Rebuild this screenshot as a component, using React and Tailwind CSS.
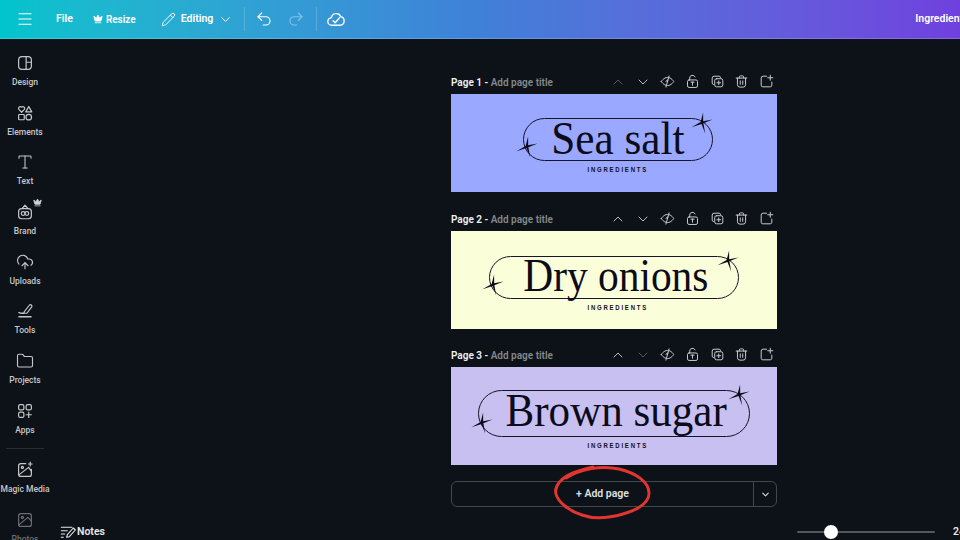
import React from "react";
import { Menu, Crown, Pencil, ChevronDown, ChevronUp, Undo2, Redo2, Type, CloudUpload, Folder } from "lucide-react";

const ui = { fontFamily: 'Roboto, "Liberation Sans", sans-serif' };

const I = ({ children, size = 18, className = "" }) => (
  <svg width={size} height={size} viewBox="0 0 24 24" fill="none" stroke="currentColor" strokeWidth="1.6" strokeLinecap="round" strokeLinejoin="round" className={className}>{children}</svg>
);

const DesignIcon = () => <I><rect x="3.5" y="3.5" width="17" height="17" rx="4.5" /><path d="M13.5 3.5v17M13.5 11h7" /></I>;
const ElementsIcon = () => <I><path d="M7.5 11 3.8 7.2a2.4 2.4 0 0 1 3.7-3 2.4 2.4 0 0 1 3.7 3z" /><path d="m17 3.5 4 7h-8z" /><rect x="3.5" y="14" width="7.5" height="7" rx="1" /><circle cx="17" cy="17.5" r="3.7" /></I>;
const BrandIcon = () => <I><path d="M8 7.5 12 3l4 4.5" /><rect x="3.5" y="7.5" width="17" height="13.5" rx="4" /><rect x="7" y="11.5" width="5" height="5" rx="2.5" /><rect x="12" y="11.5" width="5" height="5" rx="2.5" /></I>;
const ToolsIcon = () => <I><path d="m11 13 7-9a2 2 0 0 1 3 2.5l-6.5 8.5h-4z" /><path d="M4 14c2 1.5 4 1 6 1M4 19.5h16" strokeWidth="2" /></I>;
const AppsIcon = () => <I><rect x="3.5" y="3.5" width="7" height="7" rx="2" /><rect x="13.5" y="3.5" width="7" height="7" rx="2" /><rect x="3.5" y="13.5" width="7" height="7" rx="2" /><path d="M17 13.5v7M13.5 17h7" /></I>;
const MagicIcon = () => <I><path d="M13 3.5H6.5a3 3 0 0 0-3 3v11a3 3 0 0 0 3 3h11a3 3 0 0 0 3-3V11" /><path d="m3.8 18.5 13-10 3.7 5" /><circle cx="8.5" cy="8.5" r="1.4" /><path d="M19 1.5v5M16.5 4h5" /></I>;
const PhotoIcon = () => <I><rect x="3.5" y="3.5" width="17" height="17" rx="3" /><path d="m3.8 18.5 12-10 4.7 5" /><circle cx="8.5" cy="8.5" r="1.4" /></I>;
const CloudOk = () => <I size={20}><path d="M7 19.5a4.5 4.5 0 0 1-.6-9 6 6 0 0 1 11.4-1.4 5.3 5.3 0 0 1-.8 10.4z" /><path d="m8.5 14 2.5 2.5 6-7" /></I>;
const NotesIcon = () => <I size={16}><path d="M2 5h16M2 10h9M2 15h5M2 20h3" /><path d="m10 20 1-4 9-10 3 3-9 10z" /></I>;
const EyeOffIcon = () => <I size={15}><path d="M2 12s3.8-6.5 10-6.5S22 12 22 12s-3.8 6.5-10 6.5S2 12 2 12z" /><path d="M14.5 3 9.5 21" /><path d="M9.5 12a2.6 2.6 0 0 1 3.5-2.4" /></I>;
const LockIcon = () => <I size={15}><path d="M7.5 9.5V6.5a4.5 4.5 0 0 1 8.6-1.8" /><rect x="4" y="9.5" width="16" height="12" rx="2.5" /><path d="M9.5 13h5M12 13v5" /></I>;
const CopyAddIcon = () => <I size={15}><path d="M5.5 17A2.5 2.5 0 0 1 3.5 14.5v-8a3 3 0 0 1 3-3h8A2.5 2.5 0 0 1 17 5.5" /><rect x="7.5" y="7.5" width="13" height="13" rx="3" /><path d="M14 11v6M11 14h6" /></I>;
const TrashIcon = () => <I size={15}><path d="M3.5 6.5h17M8.5 6.5V5a2 2 0 0 1 2-2h3a2 2 0 0 1 2 2v1.5" /><path d="M5.5 6.5V17a4 4 0 0 0 4 4h5a4 4 0 0 0 4-4V6.5" /><path d="M10 11v5.5M14 11v5.5" /></I>;
const AddPageIcon = () => <I size={15}><path d="M12 3.5H6.5a3 3 0 0 0-3 3V18a2.5 2.5 0 0 0 2.5 2.5h12a2.5 2.5 0 0 0 2.5-2.5v-5" /><path d="M18 2v8M14 6h8" /></I>;

const Star = ({ className }) => (
  <svg viewBox="0 0 24 24" width="22" height="22" className={`absolute ${className}`} fill="#0b0b1a">
    <path d="M13.2 0.5 13.3 10 23.5 8.2 13.5 12.2 15.5 23.5 11.5 13 0.5 16.5 10.5 11z" />
  </svg>
);

const Item = ({ icon, label, dim }) => (
  <div className={`h-[49.7px] shrink-0 flex flex-col items-center justify-center gap-[5px] ${dim ? "text-[#6a6e72]" : "text-[#c6c8ca]"}`}>
    {icon}
    <span className="text-[8.5px] leading-[11px] font-medium whitespace-nowrap">{label}</span>
  </div>
);

const Tool = ({ children, dim }) => (
  <span className={`w-[24.8px] flex justify-center ${dim ? "text-[#5b5f63]" : "text-[#c8cacc]"}`}>{children}</span>
);

const PageBlock = ({ n, text, bg, mt, upDim, downDim, pillW, pillH, pillTop, shift, squeeze, textPos }) => (
  <div className={mt}>
    <div className="h-[16px] mb-[3px] flex items-center">
      <span className="mt-[-2px] text-[10px] font-semibold text-[#f0f1f2] whitespace-nowrap">Page {n} - <span className="text-[#84888c]">Add page title</span></span>
      <div className="ml-auto flex items-center mr-[-2px] mt-[-3px]">
        <Tool dim={upDim}><ChevronUp size={16} strokeWidth={1.4} /></Tool>
        <Tool dim={downDim}><ChevronDown size={16} strokeWidth={1.4} /></Tool>
        <Tool><EyeOffIcon /></Tool>
        <Tool><LockIcon /></Tool>
        <Tool><CopyAddIcon /></Tool>
        <Tool><TrashIcon /></Tool>
        <Tool><AddPageIcon /></Tool>
      </div>
    </div>
    <div className={`h-[98px] flex flex-col items-center text-[#0b0b1a] ${bg}`}>
      <div className={`relative flex items-center justify-center rounded-full border border-[#15152a] ${pillW} ${pillH} ${pillTop} ${shift}`}>
        <span className={`whitespace-nowrap leading-none text-[46px] ${squeeze} ${textPos}`} style={{ fontFamily: '"Liberation Serif", serif' }}>{text}</span>
        <Star className="right-[-1px] top-[-7px]" />
        <Star className="left-[-8px] bottom-[2px]" />
      </div>
      <span className="ml-[8px] mt-[5px] text-[7.5px] leading-[8px] font-bold tracking-[2.2px] scale-x-[0.8] text-[#101018]" style={{ fontFamily: '"Liberation Sans", sans-serif' }}>INGREDIENTS</span>
    </div>
  </div>
);

export default function App() {
  return (
    <div className="w-[960px] h-[540px] overflow-hidden flex flex-col bg-[#0d1218]" style={ui}>
      <header className="h-[39px] shrink-0 flex items-center text-white overflow-hidden border-b border-[#ffffff30] bg-gradient-to-r from-[#00c4cc] via-[#3f80d8] to-[#7040de]">
        <Menu size={18} strokeWidth={1.6} className="ml-[16px] shrink-0" />
        <span className="ml-[22px] shrink-0 text-[10.5px] font-semibold">File</span>
        <Crown size={10} fill="currentColor" className="ml-[20px] shrink-0" />
        <span className="ml-[3px] shrink-0 text-[10px] font-semibold">Resize</span>
        <Pencil size={15} strokeWidth={1.5} className="ml-[25px] shrink-0" />
        <span className="ml-[5px] shrink-0 text-[10.5px] font-semibold">Editing</span>
        <ChevronDown size={15} strokeWidth={1.6} className="ml-[5px] shrink-0" />
        <div className="ml-[11px] w-px h-[24px] shrink-0 bg-[#ffffff30]" />
        <Undo2 size={18} strokeWidth={1.5} className="ml-[10px] shrink-0" />
        <Redo2 size={18} strokeWidth={1.5} className="ml-[14px] shrink-0 opacity-40" />
        <div className="ml-[11px] w-px h-[24px] shrink-0 bg-[#ffffff30]" />
        <span className="ml-[9px] shrink-0"><CloudOk /></span>
        <span className="ml-[569px] shrink-0 text-[10.5px] font-semibold whitespace-nowrap">Ingredients</span>
      </header>
      <div className="flex-1 min-h-0 flex">
        <aside className="w-[50px] shrink-0 pt-[7px] flex flex-col overflow-hidden">
          <Item icon={<DesignIcon />} label="Design" />
          <Item icon={<ElementsIcon />} label="Elements" />
          <Item icon={<Type size={18} strokeWidth={1.4} />} label="Text" />
          <div className="relative shrink-0">
            <Item icon={<BrandIcon />} label="Brand" />
            <Crown size={9} fill="currentColor" className="absolute right-[8px] top-[3px] text-[#d0d2d4]" />
          </div>
          <Item icon={<CloudUpload size={18} strokeWidth={1.5} />} label="Uploads" />
          <Item icon={<ToolsIcon />} label="Tools" />
          <Item icon={<Folder size={18} strokeWidth={1.5} />} label="Projects" />
          <Item icon={<AppsIcon />} label="Apps" />
          <div className="mx-[6px] mt-[4px] mb-[5px] h-px bg-[#2a2e33] shrink-0" />
          <Item icon={<MagicIcon />} label="Magic Media" />
          <Item icon={<PhotoIcon />} label="Photos" dim />
        </aside>
        <main className="flex-1 min-w-0 flex flex-col">
          <div className="flex-1 min-h-0 pl-[401px] pr-[183px] pt-[36px]">
            <PageBlock n={1} text="Sea salt" bg="bg-[#9aa8ff]" mt="" upDim pillW="w-[190px]" pillH="h-[43px]" pillTop="mt-[24px]" shift="ml-[8px]" squeeze="scale-x-[0.94]" textPos="mt-[-2px]" />
            <PageBlock n={2} text="Dry onions" bg="bg-[#fbffd9]" mt="mt-[20px]" pillW="w-[250px]" pillH="h-[43px]" pillTop="mt-[25px]" shift="" squeeze="scale-x-[0.9]" textPos="mt-[-3px] ml-[4px]" />
            <PageBlock n={3} text="Brown sugar" bg="bg-[#c8c0f0]" mt="mt-[19px]" downDim pillW="w-[272px]" pillH="h-[47px]" pillTop="mt-[23px]" shift="" squeeze="scale-x-[0.936]" textPos="mt-[-5px] ml-[4px]" />
            <div className="relative mt-[16px] h-[26px] flex rounded-md border border-[#43474c] text-[#dfe0e2]">
              <div className="flex-1 flex items-center justify-center text-[10.5px] font-semibold">+ Add page</div>
              <div className="w-[23px] border-l border-[#43474c] flex items-center justify-center">
                <ChevronDown size={11} strokeWidth={2.2} />
              </div>
              <svg width="104" height="60" viewBox="0 0 104 60" fill="none" className="absolute left-[99px] top-[-18px]">
                <path d="M15 14C30 5 50 1 68 5c17 4 30 13 30 24 0 10-12 17-26 21-14 4-30 5-41 1C18 47 7 38 5 30 3 22 10 14 22 9c8-3 16-5 20-6" stroke="#e2352f" strokeWidth="3" strokeLinecap="round" />
              </svg>
            </div>
          </div>
          <div className="h-[16px] shrink-0 flex items-center text-[#e8e9ea] overflow-hidden">
            <div className="w-[747px] shrink-0 flex items-center">
              <span className="ml-[10px]"><NotesIcon /></span>
              <span className="ml-[1px] text-[10.5px] font-semibold">Notes</span>
            </div>
            <div className="relative w-[138px] h-[2px] shrink-0 bg-[#54585c] rounded-full">
              <div className="absolute left-[27px] top-[-6px] w-[14px] h-[14px] rounded-full bg-white" />
            </div>
            <span className="ml-[18px] text-[10.5px] font-semibold whitespace-nowrap">24%</span>
          </div>
        </main>
      </div>
    </div>
  );
}
